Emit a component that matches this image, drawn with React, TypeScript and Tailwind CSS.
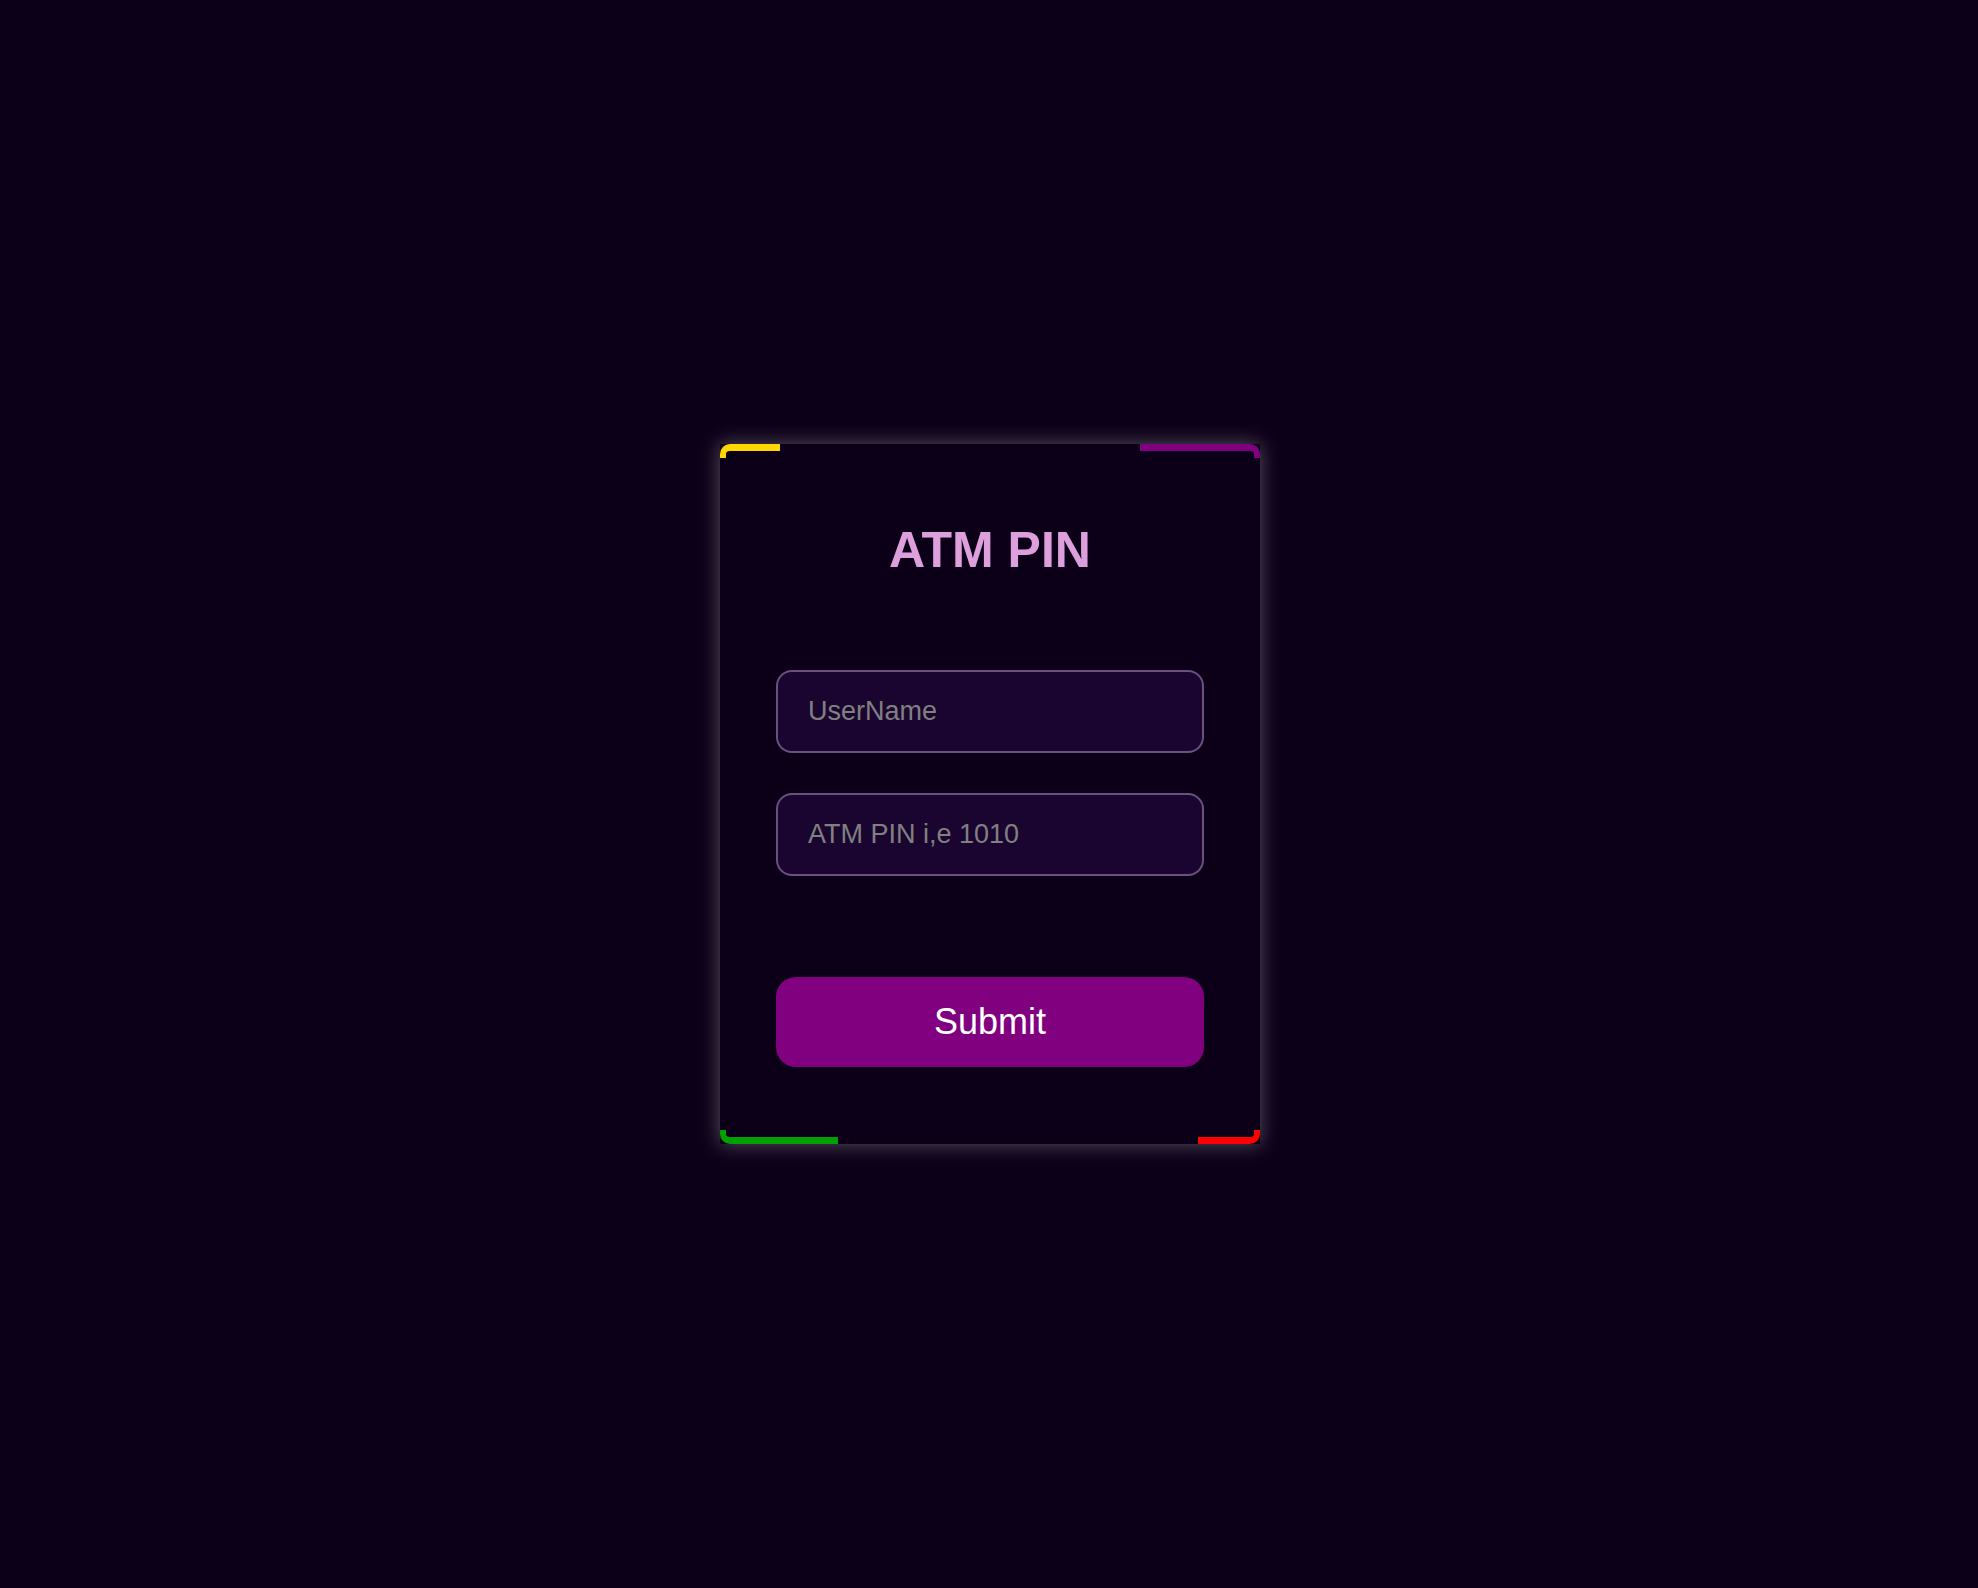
export default function App() {
  return (
    <div className="min-h-screen w-full bg-[#0c0018] flex items-center justify-center font-['Liberation_Sans',Arial,sans-serif]">
      {/* Card */}
      <div className="relative ml-[2px] w-[540px] h-[700px] bg-[#0c0018] shadow-[0_0_18px_rgba(255,255,255,0.32)] flex flex-col items-center">
        {/* corner accents */}
        <span className="absolute top-0 left-0 w-[60px] h-[14px] border-t-[7px] border-l-[6px] border-[#ffd700] rounded-tl-[10px]" />
        <span className="absolute top-0 right-0 w-[120px] h-[14px] border-t-[7px] border-r-[6px] border-[#800080] rounded-tr-[10px]" />
        <span className="absolute bottom-0 left-0 w-[118px] h-[14px] border-b-[7px] border-l-[6px] border-[#00a000] rounded-bl-[10px]" />
        <span className="absolute bottom-0 right-0 w-[62px] h-[14px] border-b-[7px] border-r-[6px] border-[#ff0000] rounded-br-[10px]" />

        <h1 className="mt-[79px] text-[50px] leading-[55px] font-bold text-[#dda0dd]">ATM PIN</h1>

        <input
          type="text"
          placeholder="UserName"
          className="mt-[92px] w-[428px] h-[83px] rounded-[16px] border-2 border-[#6b5080] bg-[#1a0530] pl-[30px] text-[27px] text-white placeholder:text-[#808080] outline-none"
        />
        <input
          type="password"
          placeholder="ATM PIN i,e 1010"
          className="mt-[40px] w-[428px] h-[83px] rounded-[16px] border-2 border-[#6b5080] bg-[#1a0530] pl-[30px] text-[27px] text-white placeholder:text-[#808080] outline-none"
        />

        <button className="mt-[101px] w-[428px] h-[90px] rounded-[20px] bg-[#800080] text-white text-[36px]">
          Submit
        </button>
      </div>
    </div>
  );
}
